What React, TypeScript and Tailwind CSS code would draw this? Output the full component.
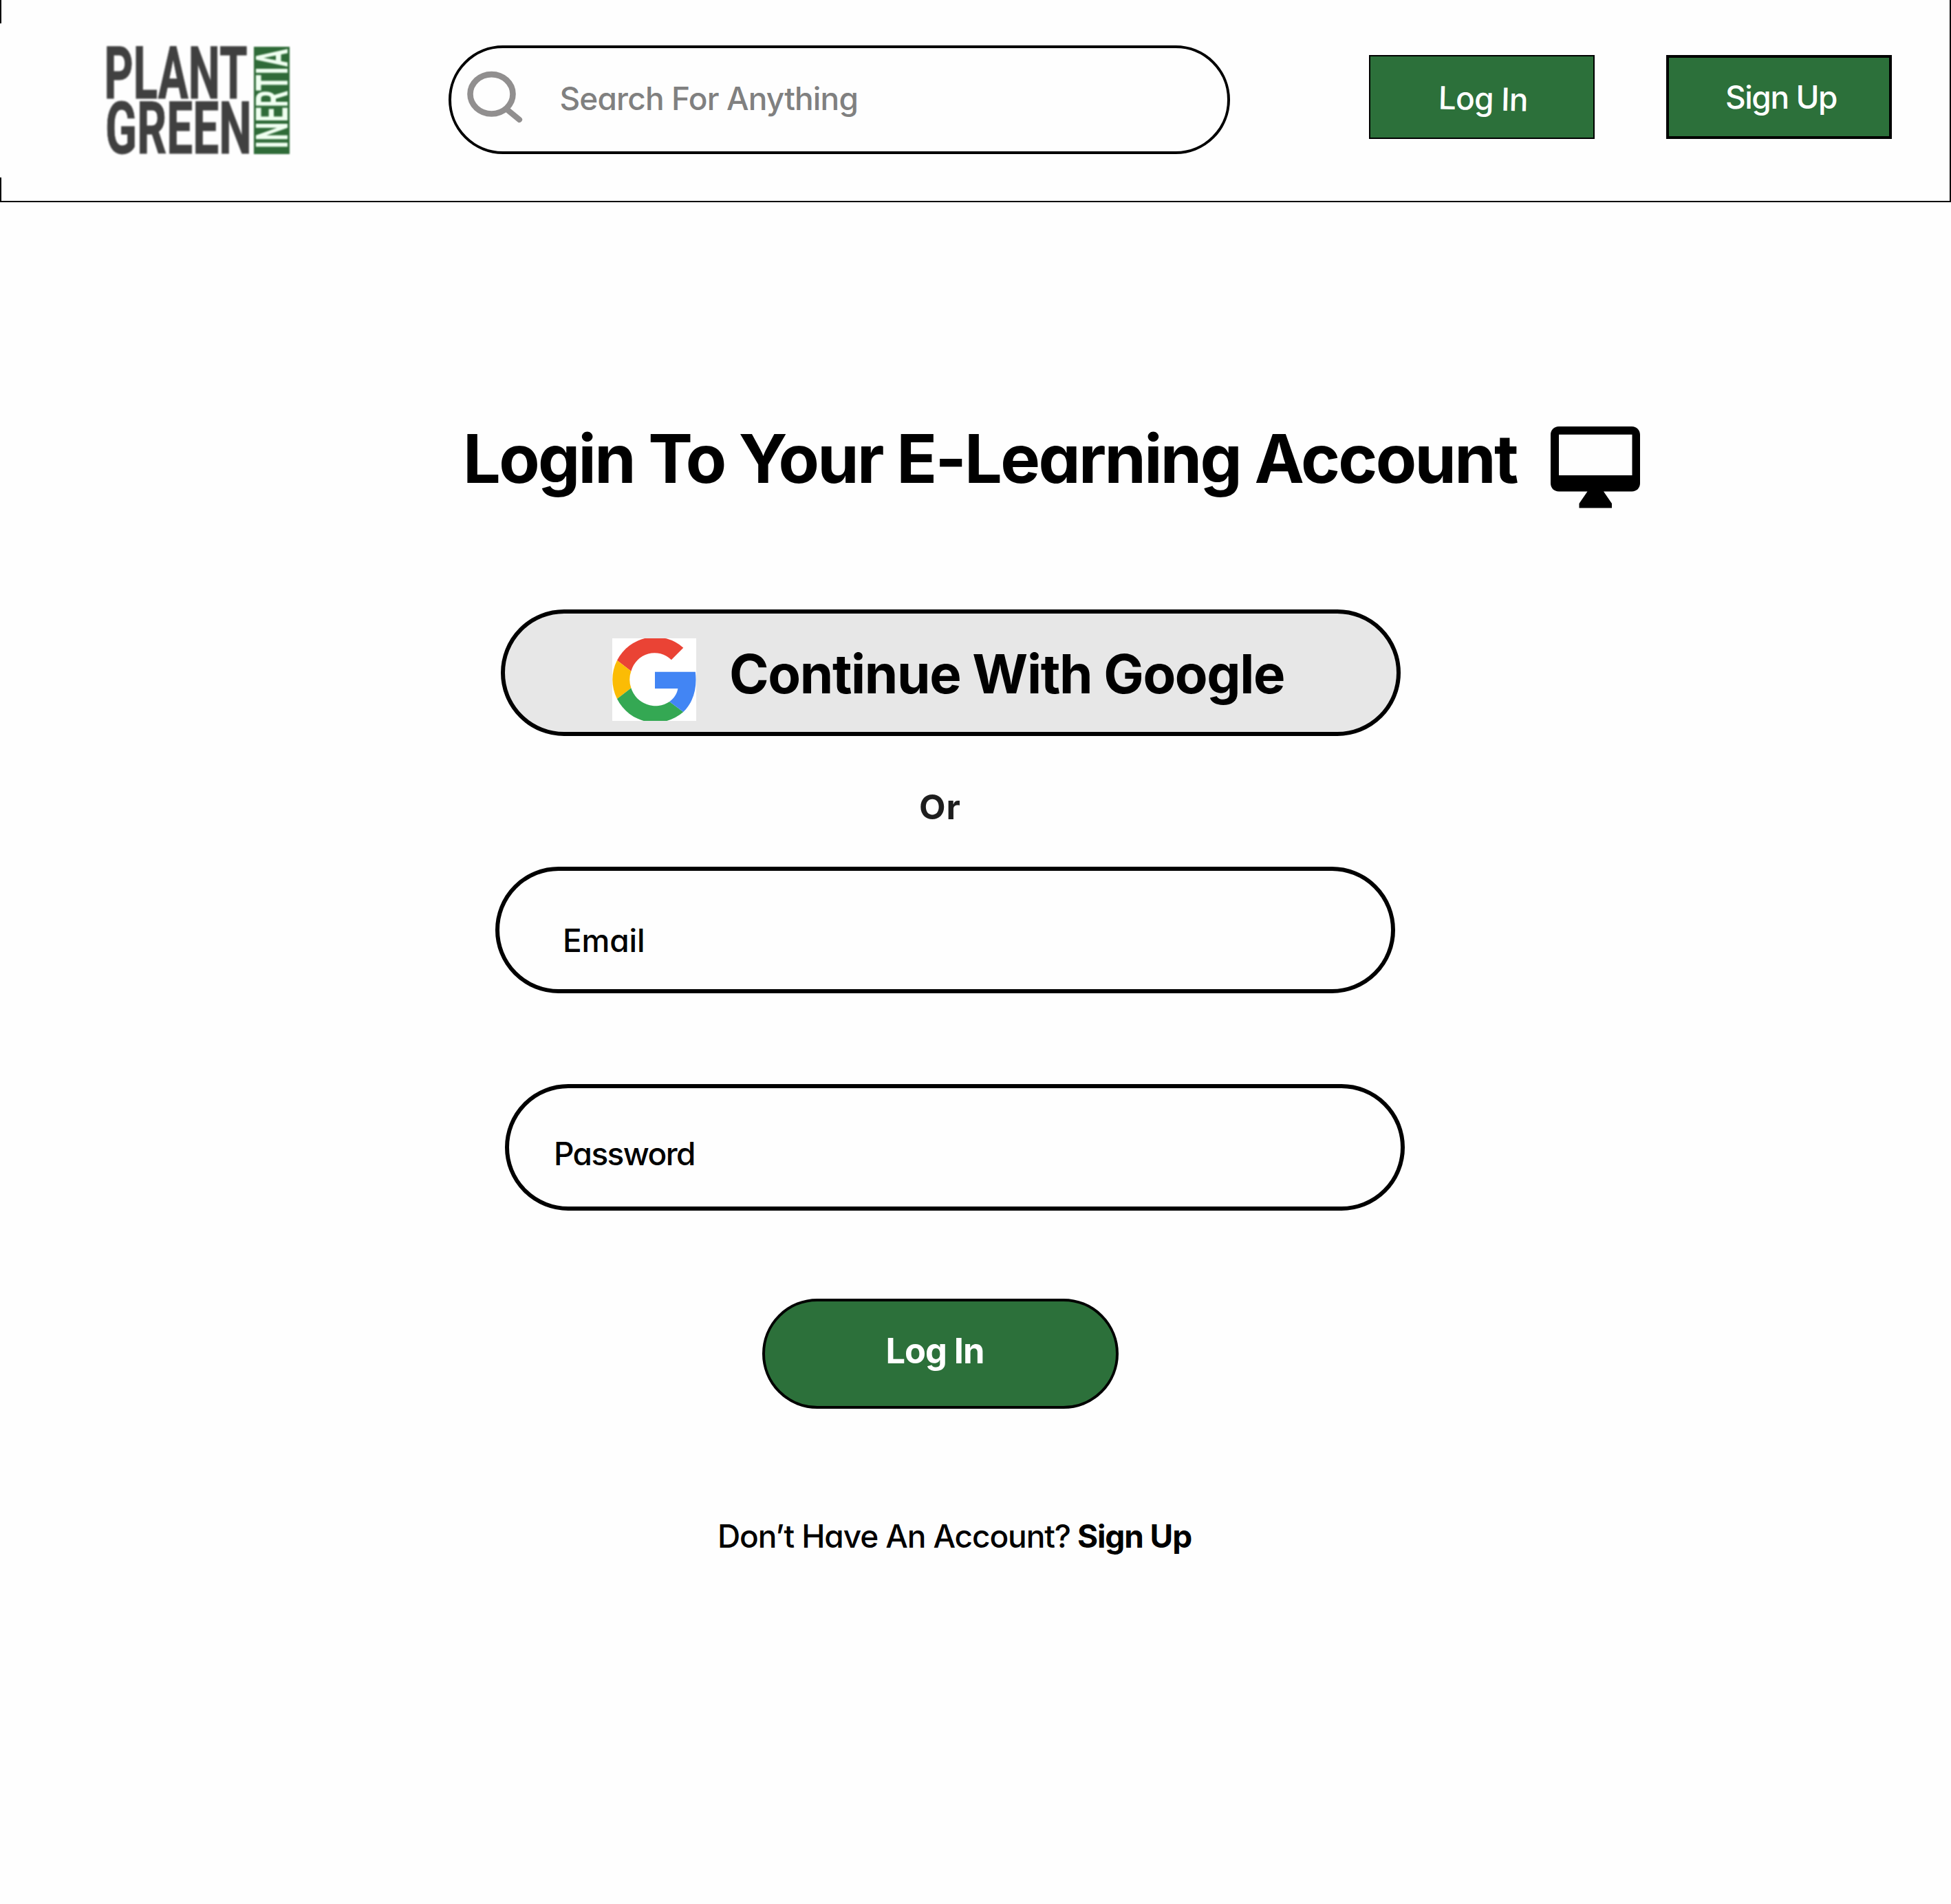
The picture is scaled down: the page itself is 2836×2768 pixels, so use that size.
function Logo() {
  return (
    <svg viewBox="0 0 500 224" className="h-[224px] w-[500px] blur-[0.8px]" role="img" aria-label="Plant Green Inertia">
      <g fontFamily="Roboto, sans-serif" fontWeight="700" fill="#404040" stroke="#404040" strokeWidth="1" fontSize="105">
        <text x="151.5" y="108.5" textLength="208" lengthAdjust="spacingAndGlyphs">
          PLANT
        </text>
        <text x="153" y="189" textLength="213" lengthAdjust="spacingAndGlyphs">
          GREEN
        </text>
      </g>
      <rect x="369" y="34" width="52" height="156" fill="#2f6b38" />
      <text
        transform="translate(417.5 182) rotate(-90)"
        textLength="145"
        lengthAdjust="spacingAndGlyphs"
        fontFamily="Roboto, sans-serif"
        fontWeight="700"
        fontSize="64"
        fill="#effff0"
      >
        INERTIA
      </text>
    </svg>
  );
}

function SearchIcon() {
  return (
    <svg viewBox="0 0 82 76" className="ml-[22px] mt-[33px] h-[76px] w-[82px] shrink-0" fill="none" stroke="#918f8f" strokeLinecap="round">
      <ellipse cx="36.5" cy="33.8" rx="31" ry="28.7" strokeWidth="8.6" />
      <path d="M60 57 L77 71" strokeWidth="8.2" />
    </svg>
  );
}

function MonitorIcon() {
  return (
    <svg viewBox="0 0 130 119" className="ml-10 mt-[3px] h-[119px] w-[130px] shrink-0">
      <path
        fillRule="evenodd"
        d="M12 0H118C125 0 130 5 130 12V82.5C130 89.5 125 94.5 118 94.5H77L89 112V118.5H41.5V112L53.5 94.5H12C5 94.5 0 89.5 0 82.5V12C0 5 5 0 12 0ZM12 11.8V71H118.5V11.8Z"
      />
    </svg>
  );
}

function GoogleIcon() {
  return (
    <svg viewBox="0 0 122 120" className="ml-[156px] mt-9 h-[120px] w-[122px] shrink-0 bg-white">
      <path fill="#ea4335" d="M7 32A62 62 0 0 1 103.3 13.7L85.9 31.3A35.5 37 0 0 0 27.4 47.7Z" />
      <path fill="#fbbc05" d="M7 32A62 62 0 0 0 7 88L27.4 72.3A37 37 0 0 1 27.4 47.7Z" />
      <path fill="#34a853" d="M7 88A62 62 0 0 0 103.3 107L83.2 92A37 37 0 0 1 27.4 72.3Z" />
      <path fill="#4285f4" d="M62 48.7H120.8C123.5 70 119 92 103.3 107L83.2 92C89.5 87.6 94 81 95.4 73H62Z" />
    </svg>
  );
}

export default function App() {
  return (
    <div className="min-h-[2768px] w-[2836px] whitespace-nowrap bg-[#fefefe] font-[Inter,sans-serif] text-[46px] font-medium leading-[60px] text-black [font-feature-settings:'cv11']">
      <header className="flex h-[294px] items-start border-x-2 border-b-2 border-black">
        <div className="relative -ml-0.5 mt-[34px] shrink-0 bg-[#fefefe]">
          <Logo />
        </div>
        <div className="ml-[152px] mt-[66px] flex h-[158px] w-[1136px] shrink-0 items-start rounded-full border-4 border-black">
          <SearchIcon />
          <span className="ml-[53.5px] mt-[43px] tracking-[-0.85px] text-[#808080]">Search For Anything</span>
        </div>
        <button className="ml-[202px] mt-20 flex h-[122px] w-[328px] shrink-0 items-start border-2 border-black bg-[#2c703a] text-white">
          <span className="ml-[99px] mt-[31px] rotate-[1.4deg] tracking-[-0.82px]">Log In</span>
        </button>
        <button className="ml-[104px] mt-20 flex h-[122px] w-[328px] shrink-0 items-start border-4 border-black bg-[#2c703a] text-white">
          <span className="ml-[82px] mt-[27px] tracking-[-1.47px]">Sign Up</span>
        </button>
      </header>

      <main className="flex flex-col items-start pt-[323px]">
        <div className="ml-[673px] flex h-[122px] items-start">
          <h1 className="w-[1541px] text-[97px] font-bold leading-[100px] tracking-[-2.67px]">
            Login To Your E-Learning Account
          </h1>
          <MonitorIcon />
        </div>

        <button className="ml-[728px] mt-[147px] flex h-[184px] w-[1308px] items-start rounded-full border-[6px] border-black bg-[#e7e7e7]">
          <GoogleIcon />
          <span className="ml-12 mt-12 text-[78px] font-bold leading-[80px] tracking-[-1.39px]">Continue With Google</span>
        </button>

        <p className="ml-[1336px] mt-[78px] text-[50px] font-bold leading-[50px] tracking-[1px] text-[#1e1e1e]">Or</p>

        <div className="ml-[720px] mt-[62px] flex h-[184px] w-[1308px] items-start rounded-full border-[6px] border-black">
          <span className="ml-[92px] mt-[71px] tracking-[-0.16px]">Email</span>
        </div>

        <div className="ml-[734px] mt-[132px] flex h-[184px] w-[1308px] items-start rounded-full border-[6px] border-black">
          <span className="ml-[65px] mt-[65px] tracking-[-1.61px]">Password</span>
        </div>

        <button className="ml-[1108px] mt-32 flex h-40 w-[518px] items-start rounded-full border-4 border-black bg-[#2c703a] text-white">
          <span className="ml-[175.5px] mt-[42px] text-[50.5px] font-bold tracking-[-1.02px]">Log In</span>
        </button>

        <p className="ml-[1043px] mt-[155px] flex gap-2.5">
          <span className="tracking-[-1.11px]">Don’t Have An Account?</span>
          <a className="font-bold tracking-[-1.11px]">Sign Up</a>
        </p>
      </main>
    </div>
  );
}
